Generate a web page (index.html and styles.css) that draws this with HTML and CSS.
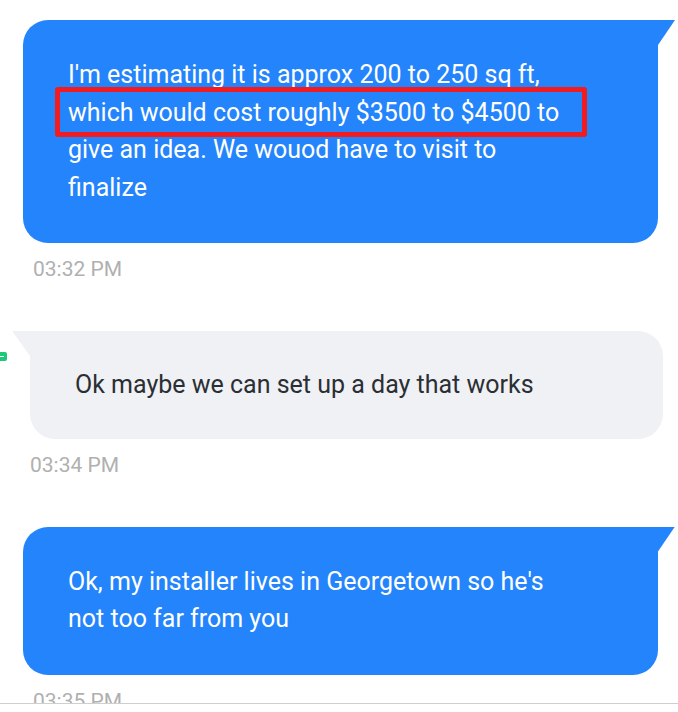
FILE: index.html
```html
<!DOCTYPE html>
<html lang="en">
<head>
    <meta charset="UTF-8">
    <meta name="viewport" content="width=device-width, initial-scale=1.0">
    <title>Conversation</title>
    <link rel="stylesheet" href="styles.css">
</head>
<body>

    <div class="thread">
        <!-- Outgoing message with highlighted line -->
        <div class="message outgoing">
            <div class="bubble">
                I'm estimating it is approx 200 to 250 sq ft,<br>
                <span class="highlight">which would cost roughly $3500 to $4500 to</span><br>
                give an idea. We wouod have to visit to<br>
                finalize
            </div>
            <div class="time">03:32 PM</div>
        </div>

        <!-- Incoming message -->
        <div class="message incoming">
            <span class="avatar"><span class="badge"></span></span>
            <div class="bubble">Ok maybe we can set up a day that works</div>
            <div class="time">03:34 PM</div>
        </div>

        <div class="message outgoing">
            <div class="bubble">
                Ok, my installer lives in Georgetown so he's<br>
                not too far from you
            </div>
            <div class="time">03:35 PM</div>
        </div>
    </div>

    <!-- Composer edge at the bottom -->
    <div class="composer"></div>

</body>
</html>
```

FILE: styles.css
```css
body {
    font-family: Roboto, "Noto Sans", Arial, sans-serif;
    background-color: #fff;
    margin: 0;
    overflow: hidden;
}
.thread {
    display: flex;
    flex-direction: column;
    gap: 50px;
    padding-top: 20px;
}
.message {
    position: relative;
    display: flex;
    flex-direction: column;
}
.outgoing {
    margin: 0 20px 0 23px;
}
.incoming {
    margin: 0 15px 0 30px;
}
.bubble {
    position: relative;
    font-size: 25px;
    line-height: 37.5px;
    border-radius: 25px;
}
.outgoing .bubble {
    background-color: #2484fc;
    color: #fff;
    padding: 36px 20px 37px 45px;
    border-top-right-radius: 0;
}
.outgoing .bubble::after {
    content: "";
    position: absolute;
    top: 0;
    right: -17px;
    width: 17px;
    height: 25px;
    background-color: #2484fc;
    clip-path: polygon(0 0, 100% 0, 0 100%);
}
.incoming .bubble {
    background-color: #eff1f5;
    color: #2b2f33;
    padding: 35px 20px 35px 45px;
    border-top-left-radius: 0;
}
.incoming .bubble::before {
    content: "";
    position: absolute;
    top: 0;
    left: -18px;
    width: 18px;
    height: 25px;
    background-color: #eff1f5;
    clip-path: polygon(0 0, 100% 0, 100% 100%);
}
.highlight {
    position: relative;
}
.highlight::after {
    content: "";
    position: absolute;
    left: -13px;
    right: -28px;
    top: -11px;
    bottom: -10px;
    border: 5px solid #f21b1f;
    border-radius: 3px;
}
.time {
    font-size: 21px;
    line-height: 24px;
    color: #b0b0b0;
    margin-top: 14px;
    padding-left: 10px;
}
.incoming .time {
    padding-left: 0;
}
.avatar {
    position: absolute;
    left: -66px;
    top: 8px;
    width: 36px;
    height: 36px;
    border-radius: 50%;
    background-color: #fbfcfd;
    box-shadow: 0 0 3px rgba(0, 0, 0, 0.04);
}
.badge {
    position: absolute;
    right: -7px;
    top: 13px;
    width: 14px;
    height: 9px;
    border-radius: 2px;
    background-color: #1fc77a;
}
.badge::after {
    content: "";
    position: absolute;
    left: 3px;
    right: 3px;
    top: 4px;
    height: 1px;
    background-color: #fff;
}
.composer {
    position: fixed;
    left: 0;
    right: 0;
    bottom: 0;
    height: 8px;
    background-color: #fff;
    border-top: 1px solid #cfcfcf;
}
```
